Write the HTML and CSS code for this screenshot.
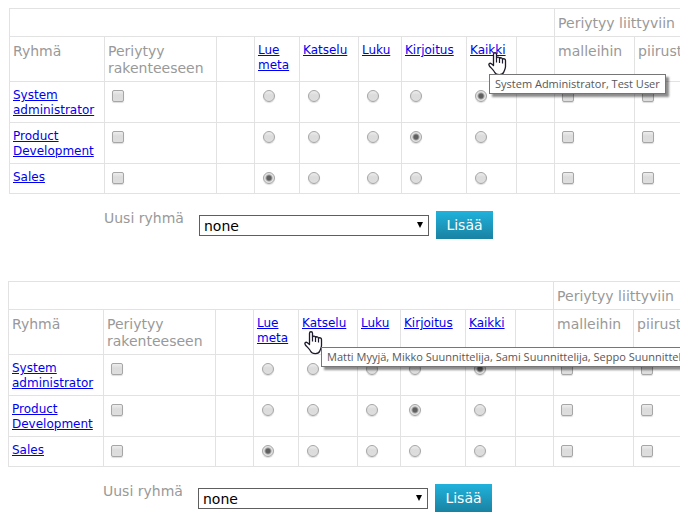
FILE: index.html
```
<!DOCTYPE html>
<html lang="fi">
<head>
  <meta charset="UTF-8" />
  <title>Ryhmien oikeudet</title>
  <link rel="stylesheet" href="styles.css">
</head>
<body>
  <!-- shared pointer shape -->
  <svg class="defs" width="0" height="0" aria-hidden="true">
    <symbol id="hand" viewBox="0 0 19 24">
      <path d="M5.5 13.5V2.3C5.5 .2 8.5 .2 8.5 2.3V6C9 4.6 11.5 4.8 11.5 6.6C12.2 5.2 14.5 5.6 14.5 7.4C15.5 6.2 17.5 6.9 17.5 8.6V14.5C17.5 17 16.4 18 15.8 20C14.8 23.2 8.4 23.6 6.6 20.2C5 17.4 3.4 16.4 1.4 14C.1 12 1.6 10.6 3.4 11.7Z" fill="#fff" stroke="#1b1b2b" stroke-width="1.3" stroke-linejoin="round"/>
      <path d="M8.5 6V10.5M11.5 6.6V11M14.5 7.4V11.5" fill="none" stroke="#1b1b2b" stroke-width="1.2"/>
    </symbol>
  </svg>

  <section class="panel panel-first">
    <table class="rights">
      <colgroup>
        <col class="c-group"><col class="c-inherit"><col class="c-gap"><col class="c-meta"><col class="c-view"><col class="c-read"><col class="c-write"><col class="c-all"><col class="c-gap"><col class="c-rel"><col class="c-rel">
      </colgroup>
      <thead>
        <tr>
          <th colspan="9"></th>
          <th colspan="2">Periytyy liittyviin</th>
        </tr>
        <tr>
          <th>Ryhmä</th>
          <th>Periytyy rakenteeseen</th>
          <th></th>
          <th><a href="#">Lue meta</a></th>
          <th><a href="#">Katselu</a></th>
          <th><a href="#">Luku</a></th>
          <th><a href="#">Kirjoitus</a></th>
          <th>
            <div class="hint">
              <a href="#">Kaikki</a>
              <svg class="pointer pointer-all" aria-hidden="true"><use href="#hand"/></svg>
              <span class="tooltip" role="tooltip">System Administrator, Test User</span>
            </div>
          </th>
          <th></th>
          <th>malleihin</th>
          <th>piirustuksiin</th>
        </tr>
      </thead>
      <tbody>
        <tr>
          <td><a href="#">System administrator</a></td>
          <td><input type="checkbox" aria-label="Periytyy rakenteeseen"></td>
          <td></td>
          <td><input type="radio" name="a-sys" aria-label="Lue meta"></td>
          <td><input type="radio" name="a-sys" aria-label="Katselu"></td>
          <td><input type="radio" name="a-sys" aria-label="Luku"></td>
          <td><input type="radio" name="a-sys" aria-label="Kirjoitus"></td>
          <td><input type="radio" name="a-sys" aria-label="Kaikki" checked></td>
          <td></td>
          <td><input type="checkbox" aria-label="malleihin"></td>
          <td><input type="checkbox" aria-label="piirustuksiin"></td>
        </tr>
        <tr>
          <td><a href="#">Product Development</a></td>
          <td><input type="checkbox" aria-label="Periytyy rakenteeseen"></td>
          <td></td>
          <td><input type="radio" name="a-dev" aria-label="Lue meta"></td>
          <td><input type="radio" name="a-dev" aria-label="Katselu"></td>
          <td><input type="radio" name="a-dev" aria-label="Luku"></td>
          <td><input type="radio" name="a-dev" aria-label="Kirjoitus" checked></td>
          <td><input type="radio" name="a-dev" aria-label="Kaikki"></td>
          <td></td>
          <td><input type="checkbox" aria-label="malleihin"></td>
          <td><input type="checkbox" aria-label="piirustuksiin"></td>
        </tr>
        <tr>
          <td><a href="#">Sales</a></td>
          <td><input type="checkbox" aria-label="Periytyy rakenteeseen"></td>
          <td></td>
          <td><input type="radio" name="a-sales" aria-label="Lue meta" checked></td>
          <td><input type="radio" name="a-sales" aria-label="Katselu"></td>
          <td><input type="radio" name="a-sales" aria-label="Luku"></td>
          <td><input type="radio" name="a-sales" aria-label="Kirjoitus"></td>
          <td><input type="radio" name="a-sales" aria-label="Kaikki"></td>
          <td></td>
          <td><input type="checkbox" aria-label="malleihin"></td>
          <td><input type="checkbox" aria-label="piirustuksiin"></td>
        </tr>
      </tbody>
    </table>

    <form class="add-group">
      <label for="groupA">Uusi ryhmä</label>
      <div class="select-box">
        <select id="groupA">
          <option>none</option>
        </select>
      </div>
      <button type="button">Lisää</button>
    </form>
  </section>

  <section class="panel">
    <table class="rights">
      <colgroup>
        <col class="c-group"><col class="c-inherit"><col class="c-gap"><col class="c-meta"><col class="c-view"><col class="c-read"><col class="c-write"><col class="c-all"><col class="c-gap"><col class="c-rel"><col class="c-rel">
      </colgroup>
      <thead>
        <tr>
          <th colspan="9"></th>
          <th colspan="2">Periytyy liittyviin</th>
        </tr>
        <tr>
          <th>Ryhmä</th>
          <th>Periytyy rakenteeseen</th>
          <th></th>
          <th><a href="#">Lue meta</a></th>
          <th>
            <div class="hint">
              <a href="#">Katselu</a>
              <svg class="pointer pointer-view" aria-hidden="true"><use href="#hand"/></svg>
              <span class="tooltip" role="tooltip">Matti Myyjä, Mikko Suunnittelija, Sami Suunnittelija, Seppo Suunnittelija</span>
            </div>
          </th>
          <th><a href="#">Luku</a></th>
          <th><a href="#">Kirjoitus</a></th>
          <th><a href="#">Kaikki</a></th>
          <th></th>
          <th>malleihin</th>
          <th>piirustuksiin</th>
        </tr>
      </thead>
      <tbody>
        <tr>
          <td><a href="#">System administrator</a></td>
          <td><input type="checkbox" aria-label="Periytyy rakenteeseen"></td>
          <td></td>
          <td><input type="radio" name="b-sys" aria-label="Lue meta"></td>
          <td><input type="radio" name="b-sys" aria-label="Katselu"></td>
          <td><input type="radio" name="b-sys" aria-label="Luku"></td>
          <td><input type="radio" name="b-sys" aria-label="Kirjoitus"></td>
          <td><input type="radio" name="b-sys" aria-label="Kaikki" checked></td>
          <td></td>
          <td><input type="checkbox" aria-label="malleihin"></td>
          <td><input type="checkbox" aria-label="piirustuksiin"></td>
        </tr>
        <tr>
          <td><a href="#">Product Development</a></td>
          <td><input type="checkbox" aria-label="Periytyy rakenteeseen"></td>
          <td></td>
          <td><input type="radio" name="b-dev" aria-label="Lue meta"></td>
          <td><input type="radio" name="b-dev" aria-label="Katselu"></td>
          <td><input type="radio" name="b-dev" aria-label="Luku"></td>
          <td><input type="radio" name="b-dev" aria-label="Kirjoitus" checked></td>
          <td><input type="radio" name="b-dev" aria-label="Kaikki"></td>
          <td></td>
          <td><input type="checkbox" aria-label="malleihin"></td>
          <td><input type="checkbox" aria-label="piirustuksiin"></td>
        </tr>
        <tr>
          <td><a href="#">Sales</a></td>
          <td><input type="checkbox" aria-label="Periytyy rakenteeseen"></td>
          <td></td>
          <td><input type="radio" name="b-sales" aria-label="Lue meta" checked></td>
          <td><input type="radio" name="b-sales" aria-label="Katselu"></td>
          <td><input type="radio" name="b-sales" aria-label="Luku"></td>
          <td><input type="radio" name="b-sales" aria-label="Kirjoitus"></td>
          <td><input type="radio" name="b-sales" aria-label="Kaikki"></td>
          <td></td>
          <td><input type="checkbox" aria-label="malleihin"></td>
          <td><input type="checkbox" aria-label="piirustuksiin"></td>
        </tr>
      </tbody>
    </table>

    <form class="add-group">
      <label for="groupB">Uusi ryhmä</label>
      <div class="select-box">
        <select id="groupB">
          <option>none</option>
        </select>
      </div>
      <button type="button">Lisää</button>
    </form>
  </section>
</body>
</html>
```
FILE: styles.css
```
* {
  box-sizing: border-box;
}

body {
  margin: 0;
  padding: 8px 0;
  background: #fff;
  color: #999;
  font-family: Verdana, "DejaVu Sans", sans-serif;
  font-size: 14px;
  line-height: 17px;
  overflow: hidden;
}

.defs {
  position: absolute;
}

.panel {
  padding-left: 8px;
}

.panel-first {
  padding-left: 9px;
  margin-bottom: 42px;
}

/* Rights table */
.rights {
  table-layout: fixed;
  width: 705px;
  border-collapse: collapse;
}

.c-group { width: 95px; }
.c-inherit { width: 112px; }
.c-gap { width: 38px; }
.c-meta { width: 45px; }
.c-view { width: 59px; }
.c-read { width: 43px; }
.c-write { width: 65px; }
.c-all { width: 50px; }
.c-rel { width: 80px; }

.rights th,
.rights td {
  border: 1px solid #e2e2e2;
  padding: 6px 3px 4px;
  text-align: left;
  vertical-align: top;
  font-weight: normal;
}

.rights a {
  display: block;
  color: #0000ee;
  font-size: 12px;
  line-height: 15px;
}

.rights input {
  appearance: none;
  display: block;
  width: 12px;
  height: 12px;
  margin: 2px 4px 5px;
  border: 1px solid #a6a6a6;
  border-radius: 2px;
  background: linear-gradient(#ededed, #dcdcdc 40%, #dedede);
  box-shadow: 0 1px 1px #ddd;
}

.rights input[type="radio"] {
  margin-left: 5px;
  border-radius: 50%;
}

.rights input[type="radio"]:checked {
  background: radial-gradient(circle, #5f5f5f 2px, #e2e2e2 4px);
}

/* Hover hint */
.hint {
  position: relative;
}

.pointer {
  position: absolute;
  z-index: 1;
  width: 19px;
  height: 24px;
}

.pointer-all {
  left: 18px;
  top: 9px;
}

.pointer-view {
  left: 2px;
  top: 15px;
}

.tooltip {
  position: absolute;
  z-index: 2;
  left: 19px;
  top: 31px;
  padding: 0 5px;
  border: 1px solid #767676;
  background: #fff;
  box-shadow: 3px 3px 2px rgba(0, 0, 0, 0.45);
  color: #575757;
  font-family: "Segoe UI", "Open Sans", sans-serif;
  font-size: 11px;
  line-height: 18px;
  white-space: nowrap;
}

/* Add a new group */
.add-group {
  display: flex;
  align-items: flex-start;
  margin-top: 17px;
  padding-left: 95px;
}

.add-group label {
  width: 95px;
  line-height: 15px;
}

.select-box {
  position: relative;
  width: 230px;
  margin: 4px 7px 0 0;
}

.select-box::after {
  content: "";
  position: absolute;
  top: 7px;
  right: 6px;
  border: solid transparent;
  border-width: 6px 3px 0;
  border-top-color: #000;
  pointer-events: none;
}

.select-box select {
  appearance: none;
  display: block;
  width: 100%;
  height: 21px;
  padding: 1px 4px 0;
  border: 1px solid #5e5e5e;
  border-radius: 0;
  background: #fff;
  color: #000;
  font: inherit;
}

.add-group button {
  width: 57px;
  height: 28px;
  padding: 0;
  border: none;
  background: linear-gradient(#20b2dc, #1a82a2);
  color: #fff;
  font: inherit;
  cursor: pointer;
}
```
